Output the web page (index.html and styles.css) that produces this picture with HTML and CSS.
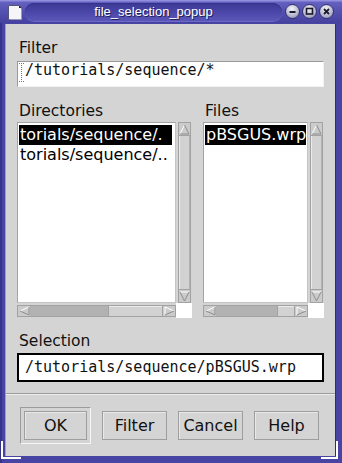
FILE: index.html
```html
<!DOCTYPE html>
<html>
<head>
<meta charset="utf-8">
<link rel="stylesheet" href="styles.css">
</head>
<body>
<div class="window">
  <div class="titlebar">
    <svg class="doc-icon" width="16" height="17" viewBox="0 0 16 17">
      <path d="M1.5 1.5 H12 L14.5 4 V15.5 H1.5 Z" fill="#f6f6f8" stroke="#55557a"/>
      <path d="M12 1.5 L14.5 4 H12 Z" fill="#222"/>
      <path d="M2.5 15.5 H14.5 V4.5" fill="none" stroke="#9a9ab8"/>
    </svg>
    <div class="title-pill"><span class="title">file_selection_popup</span></div>
    <div class="tb-buttons">
      <span class="tb-btn"><svg width="13" height="13" viewBox="0 0 13 13"><path d="M3.5 7 H9.5" stroke="#1a1a2a" stroke-width="2"/></svg></span>
      <span class="tb-btn"><svg width="13" height="13" viewBox="0 0 13 13"><rect x="3.5" y="3.5" width="6" height="5.5" fill="none" stroke="#1a1a2a" stroke-width="1.6"/></svg></span>
      <span class="tb-btn"><svg width="13" height="13" viewBox="0 0 13 13"><path d="M4 4 L9 9 M9 4 L4 9" stroke="#1a1a2a" stroke-width="1.8"/></svg></span>
    </div>
  </div>
  <div class="frame">
    <div class="panel">
      <div class="main">
        <div class="label">Filter</div>
        <div class="field filter-field">
          <svg class="ibeam" width="5" height="19" viewBox="0 0 5 19">
            <path d="M0 0.5 H5 M2.5 0 V19 M0 18.5 H5" fill="none" stroke="#777" stroke-dasharray="1 1"/>
          </svg><span>/tutorials/sequence/*</span>
        </div>
        <div class="lists">
          <div class="col dirs">
            <div class="label">Directories</div>
            <div class="scrollpane">
              <div class="listbox">
                <div class="item selected">torials/sequence/.</div>
                <div class="item">torials/sequence/..</div>
              </div>
              <div class="vscroll">
                <div class="varrow"><svg width="11" height="11" viewBox="0 0 11 11"><path d="M1 10 L5.5 1" stroke="#fff" fill="none"/><path d="M5.5 1 L10 10 H1" stroke="#8e8e8e" fill="none"/></svg></div>
                <div class="vthumb"></div>
                <div class="varrow"><svg width="11" height="11" viewBox="0 0 11 11"><path d="M1 1 H10" stroke="#fff" fill="none"/><path d="M10 1 L5.5 10 L1 1" stroke="#8e8e8e" fill="none"/></svg></div>
              </div>
              <div class="hscroll">
                <div class="harrow"><svg width="11" height="10" viewBox="0 0 11 10"><path d="M10 1 L1 5 " stroke="#fff" fill="none"/><path d="M1 5 L10 9 V1" stroke="#8e8e8e" fill="none"/></svg></div>
                <div class="trough"><div class="hthumb"></div></div>
                <div class="harrow"><svg width="11" height="10" viewBox="0 0 11 10"><path d="M1 9 V1 L10 5" stroke="#fff" fill="none"/><path d="M10 5 L1 9" stroke="#8e8e8e" fill="none"/></svg></div>
              </div>
              <div class="corner"></div>
            </div>
          </div>
          <div class="col files">
            <div class="label">Files</div>
            <div class="scrollpane">
              <div class="listbox">
                <div class="item selected">pBSGUS.wrp</div>
              </div>
              <div class="vscroll">
                <div class="varrow"><svg width="11" height="11" viewBox="0 0 11 11"><path d="M1 10 L5.5 1" stroke="#fff" fill="none"/><path d="M5.5 1 L10 10 H1" stroke="#8e8e8e" fill="none"/></svg></div>
                <div class="vthumb"></div>
                <div class="varrow"><svg width="11" height="11" viewBox="0 0 11 11"><path d="M1 1 H10" stroke="#fff" fill="none"/><path d="M10 1 L5.5 10 L1 1" stroke="#8e8e8e" fill="none"/></svg></div>
              </div>
              <div class="hscroll">
                <div class="harrow"><svg width="11" height="10" viewBox="0 0 11 10"><path d="M10 1 L1 5 " stroke="#fff" fill="none"/><path d="M1 5 L10 9 V1" stroke="#8e8e8e" fill="none"/></svg></div>
                <div class="trough"><div class="hthumb"></div></div>
                <div class="harrow"><svg width="11" height="10" viewBox="0 0 11 10"><path d="M1 9 V1 L10 5" stroke="#fff" fill="none"/><path d="M10 5 L1 9" stroke="#8e8e8e" fill="none"/></svg></div>
              </div>
              <div class="corner"></div>
            </div>
          </div>
        </div>
        <div class="label sel-label">Selection</div>
        <div class="field sel-field">/tutorials/sequence/pBSGUS.wrp</div>
      </div>
      <div class="sep"></div>
      <div class="buttons">
        <div class="default-ring"><div class="btn ok">OK</div></div>
        <div class="btn">Filter</div>
        <div class="btn">Cancel</div>
        <div class="btn">Help</div>
      </div>
    </div>
  </div>
  <div class="grip grip-l"></div>
  <div class="grip grip-r"></div>
</div>
</body>
</html>
```
FILE: styles.css
```css
* { box-sizing: border-box; }
html, body { margin: 0; padding: 0; }
body {
  width: 342px;
  height: 463px;
  overflow: hidden;
  background: #4845a3;
  font-family: "DejaVu Sans", sans-serif;
}
.window {
  position: relative;
  width: 342px;
  height: 463px;
  display: flex;
  flex-direction: column;
  background: #4744a4;
}
.titlebar {
  height: 23px;
  display: flex;
  align-items: center;
  padding: 0 8px 0 7px;
  background: linear-gradient(#9290de 0, #9290de 1px, #6461c0 2px, #5552b2 45%, #45429f 100%);
}
.doc-icon { display: block; width: 16px; height: 17px; margin-top: 1px; }
.title-pill {
  flex: 1;
  height: 18px;
  margin: 0 3px 0 2px;
  border-radius: 9px;
  background: linear-gradient(#3b3894 0, #4845a6 45%, #5a57b9 100%);
  box-shadow: inset 0 1px 0 #34318a, 0 1px 0 #6c69c8;
  display: flex;
  align-items: center;
  justify-content: center;
}
.title {
  font-family: "Liberation Sans", sans-serif;
  font-size: 13px;
  color: #fff;
  text-shadow: 1px 1px 0 #1e1c5a;
  line-height: 16px;
  margin-top: 1px;
}
.tb-buttons { display: flex; gap: 2px; }
.tb-btn {
  width: 15px;
  height: 15px;
  border-radius: 50%;
  border: 1px solid #34326e;
  background: radial-gradient(circle at 45% 30%, #f4f4fa 0, #c6c6da 45%, #8482ae 100%);
  display: flex;
  align-items: center;
  justify-content: center;
}
.tb-btn svg { display: block; }
.frame {
  flex: 1;
  display: flex;
  padding: 1px 7px 7px 6px;
  background: #4744a4;
  border-left: 2px solid #34328a;
}
.frame { padding-left: 4px; }
.panel {
  flex: 1;
  background: #d4d4d4;
  display: flex;
  flex-direction: column;
  box-shadow: -1px 0 0 #9c9ae0, 1px 0 0 #2e2c7c;
}
.main { padding: 0 11px; }
.label {
  font-size: 15.5px;
  line-height: 18px;
  color: #111;
  padding-left: 2px;
  margin-top: 15px;
}
.field {
  background: #fff;
  font-family: "DejaVu Sans Mono", monospace;
  font-size: 15px;
  color: #111;
  white-space: nowrap;
  overflow: hidden;
}
.filter-field {
  margin-top: 4px;
  height: 26px;
  border: 1px solid;
  border-color: #9a9a9a #f2f2f2 #f2f2f2 #9a9a9a;
  display: flex;
  align-items: flex-start;
  padding-left: 1px;
  line-height: 16px;
}
.ibeam { display: block; margin-top: 1px; margin-right: 1px; flex: none; }
.filter-field span { display: block; padding-top: 0; }
.lists { display: flex; gap: 11px; }
.dirs { width: 175px; }
.files { flex: 1; }
.scrollpane {
  margin-top: 2px;
  display: grid;
  grid-template-columns: 1fr 16px;
  grid-template-rows: 181px 15px;
}
.listbox {
  background: #fff;
  border: 1px solid;
  border-color: #a4a4a4 #c4c4c4 #c4c4c4 #a4a4a4;
  padding: 2px 1px;
  overflow: hidden;
}
.item {
  font-size: 16px;
  line-height: 20px;
  height: 20px;
  padding-left: 1px;
  white-space: nowrap;
  overflow: hidden;
  color: #000;
}
.item.selected { background: #000; color: #fff; }
.dirs .item { margin-right: 2px; }
.vscroll {
  margin-left: 2px;
  width: 13px;
  display: flex;
  flex-direction: column;
  border: 1px solid #a2a2a2;
  background: #c6c6c6;
}
.varrow {
  height: 12px;
  flex: none;
  display: flex;
  align-items: center;
  justify-content: center;
  background: #cbcbcb;
}
.varrow svg { display: block; }
.vthumb {
  flex: 1;
  background: #d2d2d2;
  border-top: 1px solid #a2a2a2;
  border-bottom: 1px solid #a2a2a2;
  box-shadow: inset 1px 0 0 #ebebeb, inset -1px 0 0 #b2b2b2;
}
.hscroll {
  margin-top: 2px;
  height: 12px;
  display: flex;
  border: 1px solid #a2a2a2;
  background: #b2b2b2;
}
.harrow {
  width: 12px;
  flex: none;
  background: #cbcbcb;
  display: flex;
  align-items: center;
  justify-content: center;
}
.harrow svg { display: block; }
.trough { flex: 1; display: flex; justify-content: flex-end; }
.hthumb {
  background: #d2d2d2;
  border-left: 1px solid #a2a2a2;
  border-right: 1px solid #a2a2a2;
  box-shadow: inset 0 1px 0 #ebebeb;
}
.dirs .hthumb { width: 55px; }
.files .hthumb { width: 18px; }
.corner { background: #fff; }
.sel-label { margin-top: 14px; }
.sel-field {
  margin-top: 3px;
  height: 29px;
  border: 2px solid #000;
  padding-left: 6px;
  line-height: 25px;
}
.sep {
  margin-top: 11px;
  height: 2px;
  border-top: 1px solid #9c9c9c;
  border-bottom: 1px solid #ececec;
}
.buttons {
  display: flex;
  justify-content: space-between;
  align-items: flex-start;
  padding: 12px 16px 0 14px;
}
.default-ring {
  padding: 3px;
  border: 1px solid;
  border-color: #9c9c9c #f6f6f6 #f6f6f6 #9c9c9c;
}
.btn {
  width: 65px;
  height: 29px;
  margin-top: 4px;
  border: 1px solid #9e9e9e;
  background: #d4d4d4;
  box-shadow: inset 1px 1px 0 #e8e8e8;
  font-size: 16px;
  line-height: 27px;
  text-align: center;
  color: #111;
}
.btn.ok { width: 63px; margin-top: 0; }
.grip {
  position: absolute;
  bottom: 4px;
  width: 20px;
  height: 18px;
  border-bottom: 2px solid #fff;
}
.grip-l { left: 1px; border-left: 2px solid #fff; }
.grip-r { right: 4px; width: 17px; border-right: 2px solid #fff; }
```
